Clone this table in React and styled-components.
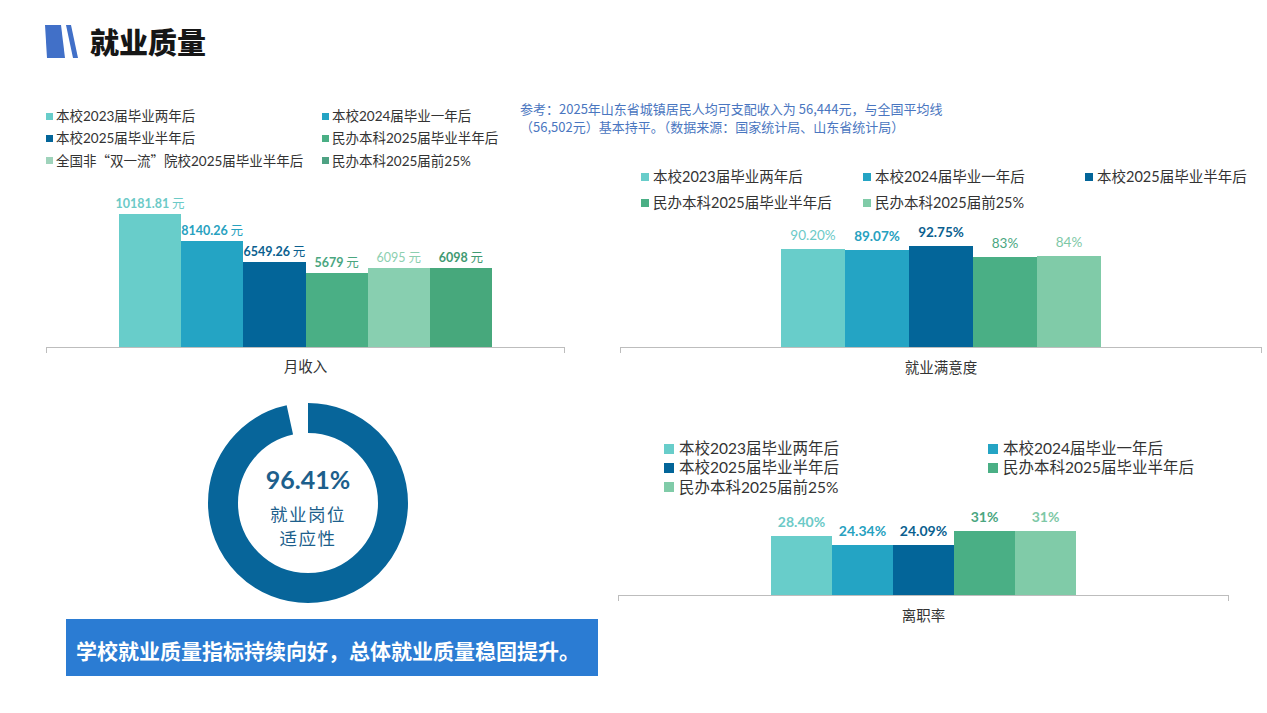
import React from 'react';
import styled, { createGlobalStyle } from 'styled-components';

const GlobalStyle = createGlobalStyle`
  body {
    margin: 0;
    background: #fff;
  }
`;

const Page = styled.div`
  width: 1267px;
  height: 713px;
  overflow: hidden;
  background: #fff;
  font-family: Lato, "Noto Sans CJK SC", sans-serif;
  color: #333;
`;

const Header = styled.header`
  height: 100px;
  box-sizing: border-box;
  padding: 23px 0 0 45px;
  display: flex;
  align-items: flex-start;
  gap: 11px;
`;

const HeaderInner = styled.div`
  display: flex;
  align-items: center;
  gap: 11px;
  height: 36px;
`;

const Title = styled.h1`
  margin: 0;
  font-family: "Noto Sans CJK SC", sans-serif;
  font-size: 29px;
  line-height: 36px;
  font-weight: 900;
  color: #161616;
`;

const Body = styled.div`
  display: grid;
  grid-template-columns: 480px 50px 1fr;
  grid-template-rows: 68px auto;
  padding-left: 40px;
`;

const TopLegend = styled.div`
  grid-column: 1;
  grid-row: 1;
  padding: 8px 0 0 6px;
  display: grid;
  grid-template-columns: 276px auto;
  row-gap: 6px;
  font-size: 13.5px;
  line-height: 16px;
`;

const Quote = styled.span`
  font-family: "Noto Sans CJK SC", sans-serif;
`;

const Note = styled.div`
  grid-column: 2 / 4;
  grid-row: 1;
  font-family: "Noto Sans CJK SC", sans-serif;
  font-size: 13px;
  line-height: 18px;
  color: #4a76c0;
  white-space: nowrap;
`;

const LeftStack = styled.div`
  grid-column: 1 / 3;
  grid-row: 2;
  display: flex;
  flex-direction: column;
`;

const RightStack = styled.div`
  grid-column: 3;
  grid-row: 2;
  display: flex;
  flex-direction: column;
`;

const Legend = styled.div`
  display: grid;
  grid-template-columns: repeat(${p => p.$cols}, ${p => p.$colW}px);
  row-gap: ${p => p.$gap}px;
  padding-left: ${p => p.$pl}px;
  margin-top: ${p => p.$mt || 0}px;
  font-size: ${p => p.$fs}px;
  line-height: ${p => p.$lh}px;
`;

const LegendItem = styled.div`
  display: flex;
  align-items: center;
  gap: ${p => p.$gap || 4}px;
  white-space: nowrap;
`;

const Swatch = styled.span`
  flex: none;
  width: ${p => p.$size}px;
  height: ${p => p.$size}px;
  background: ${p => p.$color};
`;

const Chart = styled.div`
  width: ${p => p.$w}px;
  margin-left: ${p => p.$ml}px;
`;

const Plot = styled.div`
  position: relative;
  height: ${p => p.$h}px;
  display: flex;
  justify-content: center;
  align-items: flex-end;
  border-bottom: 1px solid #bdbdbd;

  &::before,
  &::after {
    content: '';
    position: absolute;
    bottom: -6px;
    width: 1px;
    height: 6px;
    background: #bdbdbd;
  }
  &::before { left: 0; }
  &::after { right: 0; }
`;

const BarCol = styled.div`
  width: ${p => p.$w}px;
  display: flex;
  flex-direction: column;
  align-items: center;
`;

const ValueLabel = styled.div`
  white-space: nowrap;
  font-family: Lato, "Noto Sans CJK SC", sans-serif;
  font-size: ${p => p.$fs}px;
  line-height: ${p => p.$fs + 2}px;
  font-weight: ${p => (p.$bold ? 700 : 400)};
  color: ${p => p.$color};
  margin-bottom: ${p => p.$gap}px;
`;

const Unit = styled.span`
  font-family: "Noto Sans CJK SC", sans-serif;
  font-weight: 400;
`;

const Bar = styled.div`
  width: 100%;
  background: ${p => p.$color};
`;

const Category = styled.div`
  text-align: center;
  font-family: "Noto Sans CJK SC", sans-serif;
  font-size: ${p => p.$fs}px;
  line-height: 20px;
  margin-top: ${p => p.$mt}px;
  color: #333;
`;

const DonutWrap = styled.div`
  position: relative;
  width: 200px;
  height: 200px;
  margin: 27px 0 0 168px;
`;

const DonutText = styled.div`
  position: absolute;
  inset: 0;
  padding-top: 61px;
  display: flex;
  flex-direction: column;
  align-items: center;
  color: #1d5f8c;
`;

const Percent = styled.div`
  font-family: Lato, sans-serif;
  font-weight: 700;
  font-size: 25px;
  line-height: 30px;
  margin-bottom: 8px;
`;

const DonutCaption = styled.div`
  font-family: "Noto Sans CJK SC", sans-serif;
  font-size: 17.5px;
  line-height: 24px;
  letter-spacing: 1.5px;
  text-align: center;
`;

const Banner = styled.div`
  margin: 16px 0 0 26px;
  width: 532px;
  height: 57px;
  box-sizing: border-box;
  padding: 4px 0 0 10px;
  display: flex;
  align-items: center;
  background: #2b7cd3;
  color: #fff;
  font-family: "Noto Sans CJK SC", sans-serif;
  font-weight: 700;
  font-size: 21px;
  white-space: nowrap;
`;

const C = {
  teal: '#68cdca',
  blue: '#24a4c4',
  navy: '#036599',
  green: '#4aaf85',
  pale: '#88cfb0',
  deep: '#47a87c',
  mint: '#80cba8',
};

const L = {
  teal: '#6ccac7',
  blue: '#27a1c0',
  navy: '#0b5f8f',
  green: '#4aa67f',
  pale: '#8ccfb0',
  deep: '#3f9a72',
  mint: '#7ec8a6',
};

const incomeLegend = [
  ['本校2023届毕业两年后', C.teal],
  ['本校2024届毕业一年后', C.blue],
  ['本校2025届毕业半年后', C.navy],
  ['民办本科2025届毕业半年后', C.green],
  [<>全国非<Quote>“双一流”</Quote>院校2025届毕业半年后</>, '#9fd3bb'],
  ['民办本科2025届前25%', '#4ea283'],
];

const fiveLegend = [
  ['本校2023届毕业两年后', C.teal],
  ['本校2024届毕业一年后', C.blue],
  ['本校2025届毕业半年后', C.navy],
  ['民办本科2025届毕业半年后', C.green],
  ['民办本科2025届前25%', C.mint],
];

const incomeBars = [
  { v: 10181.81, text: '10181.81', color: C.teal, lc: L.teal, bold: true },
  { v: 8140.26, text: '8140.26', color: C.blue, lc: L.blue, bold: true },
  { v: 6549.26, text: '6549.26', color: C.navy, lc: L.navy, bold: true },
  { v: 5679, text: '5679', color: C.green, lc: L.green, bold: true },
  { v: 6095, text: '6095', color: C.pale, lc: L.pale, bold: false },
  { v: 6098, text: '6098', color: C.deep, lc: L.deep, bold: true },
];

const satisfactionBars = [
  { v: 90.2, text: '90.20%', color: C.teal, lc: L.teal, bold: false },
  { v: 89.07, text: '89.07%', color: C.blue, lc: L.blue, bold: true },
  { v: 92.75, text: '92.75%', color: C.navy, lc: L.navy, bold: true },
  { v: 83, text: '83%', color: C.green, lc: L.green, bold: false },
  { v: 84, text: '84%', color: C.mint, lc: L.mint, bold: false },
];

const turnoverBars = [
  { v: 28.4, text: '28.40%', color: C.teal, lc: L.teal, bold: true },
  { v: 24.34, text: '24.34%', color: C.blue, lc: L.blue, bold: true },
  { v: 24.09, text: '24.09%', color: C.navy, lc: L.navy, bold: true },
  { v: 31, text: '31%', color: C.green, lc: L.green, bold: true },
  { v: 31, text: '31%', color: C.mint, lc: L.mint, bold: true },
];

function Logo() {
  return (
    <svg width="34" height="34" viewBox="0 0 34 34">
      <polygon points="0,1 16,1 20,34 2,34" fill="#4170c8" />
      <polygon points="21,1 26,1 33,34 28,34" fill="#4170c8" />
    </svg>
  );
}

function BarChart({ bars, scale, barW, plotH, width, ml, fs, gap, unit, category, catMt }) {
  return (
    <Chart $w={width} $ml={ml}>
      <Plot $h={plotH}>
        {bars.map((b, i) => (
          <BarCol key={i} $w={barW}>
            <ValueLabel $fs={fs} $bold={b.bold} $color={b.lc} $gap={gap}>
              {b.text}
              {unit && <Unit> {unit}</Unit>}
            </ValueLabel>
            <Bar $color={b.color} style={{ height: Math.round(b.v * scale) }} />
          </BarCol>
        ))}
      </Plot>
      <Category $fs={14.5} $mt={catMt}>{category}</Category>
    </Chart>
  );
}

function Donut({ value }) {
  const r = 85;
  const len = 2 * Math.PI * r;
  const dash = (len * value) / 100;
  return (
    <DonutWrap>
      <svg width="200" height="200" viewBox="0 0 200 200">
        <circle
          cx="100"
          cy="100"
          r={r}
          fill="none"
          stroke="#07659a"
          strokeWidth="30"
          strokeDasharray={`${dash} ${len - dash}`}
          transform="rotate(-90 100 100)"
        />
      </svg>
      <DonutText>
        <Percent>{value}%</Percent>
        <DonutCaption>就业岗位<br />适应性</DonutCaption>
      </DonutText>
    </DonutWrap>
  );
}

export default function App() {
  return (
    <Page>
      <GlobalStyle />
      <Header>
        <HeaderInner>
          <Logo />
          <Title>就业质量</Title>
        </HeaderInner>
      </Header>
      <Body>
        <TopLegend>
          {incomeLegend.map(([t, c], i) => (
            <LegendItem key={i} $gap={3}>
              <Swatch $size={7} $color={c} />
              <span>{t}</span>
            </LegendItem>
          ))}
        </TopLegend>
        <Note>
          参考：2025年山东省城镇居民人均可支配收入为 56,444元，与全国平均线
          <br />
          （56,502元）基本持平。（数据来源：国家统计局、山东省统计局）
        </Note>

        <LeftStack>
          <BarChart
            bars={incomeBars}
            scale={0.01302}
            barW={62.2}
            plotH={179}
            width={519}
            ml={6}
            fs={12.5}
            gap={3}
            unit="元"
            category="月收入"
            catMt={8}
          />
          <Donut value={96.41} />
          <Banner>学校就业质量指标持续向好，总体就业质量稳固提升。</Banner>
        </LeftStack>

        <RightStack>
          <Legend $cols={3} $colW={222} $gap={8} $pl={71} $fs={14.5} $lh={18}>
            {fiveLegend.map(([t, c]) => (
              <LegendItem key={t}>
                <Swatch $size={8} $color={c} />
                {t}
              </LegendItem>
            ))}
          </Legend>
          <BarChart
            bars={satisfactionBars}
            scale={1.085}
            barW={64}
            plotH={135}
            width={642}
            ml={50}
            fs={13.5}
            gap={6}
            category="就业满意度"
            catMt={9}
          />
          <Legend $cols={2} $colW={324} $gap={0} $pl={94} $fs={15.5} $lh={19.3} $mt={62}>
            {fiveLegend.map(([t, c]) => (
              <LegendItem key={t} $gap={5}>
                <Swatch $size={10} $color={c} />
                {t}
              </LegendItem>
            ))}
          </Legend>
          <BarChart
            bars={turnoverBars}
            scale={2.07}
            barW={61}
            plotH={98}
            width={611}
            ml={48}
            fs={14}
            gap={6}
            category="离职率"
            catMt={9}
          />
        </RightStack>
      </Body>
    </Page>
  );
}
